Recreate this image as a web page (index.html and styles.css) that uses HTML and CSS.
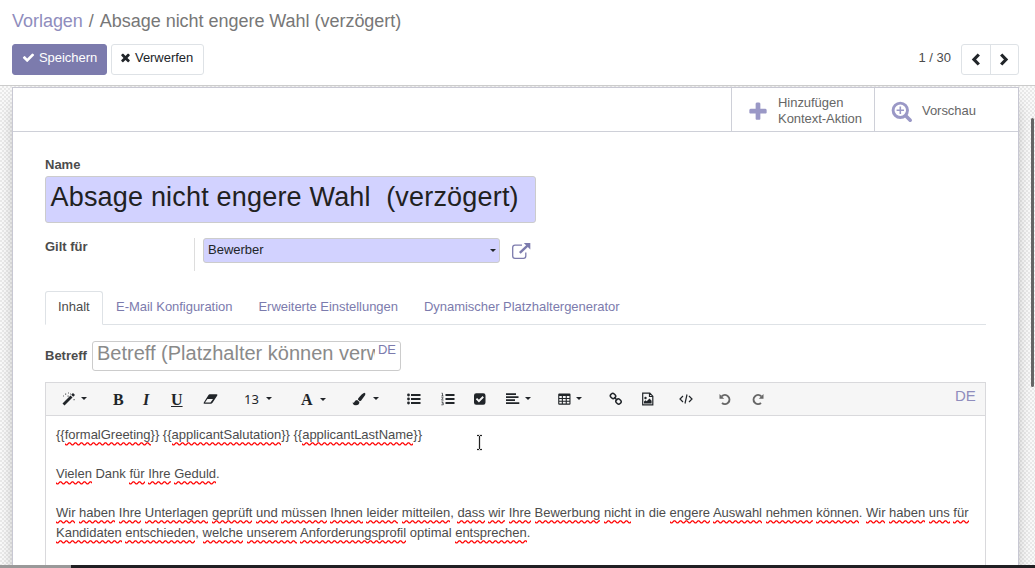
FILE: index.html
```html
<!DOCTYPE html>
<html lang="de">
<head>
<meta charset="utf-8">
<title>Vorlagen</title>
<link rel="stylesheet" href="styles.css">
</head>
<body>
<div class="app">
<header class="control-panel">
  <nav class="breadcrumb"><a class="crumb-link">Vorlagen</a><span class="crumb-sep">/</span><span class="crumb-current">Absage nicht engere Wahl (verzögert)</span></nav>
  <div class="actions">
    <button class="btn btn-primary"><svg width="13" height="13" viewBox="0 0 1792 1792"><path d="M1671 566q0 40-28 68l-724 724-136 136q-28 28-68 28t-68-28l-136-136-362-362q-28-28-28-68t28-68l136-136q28-28 68-28t68 28l294 295 656-657q28-28 68-28t68 28l136 136q28 28 28 68z"/></svg><span class="save-text">Speichern</span></button>
    <button class="btn btn-plain"><svg width="13" height="13" viewBox="0 0 1792 1792"><path d="M1490 1322q0 40-28 68l-136 136q-28 28-68 28t-68-28l-294-294-294 294q-28 28-68 28t-68-28l-136-136q-28-28-28-68t28-68l294-294-294-294q-28-28-28-68t28-68l136-136q28-28 68-28t68 28l294 294 294-294q28-28 68-28t68 28l136 136q28 28 28 68t-28 68l-294 294 294 294q28 28 28 68z"/></svg><span class="discard-text">Verwerfen</span></button>
    <span class="pager-count">1 / 30</span>
    <div class="pager">
      <button class="pager-btn"><svg width="13" height="14" viewBox="0 0 13 14"><path class="chev" d="M9.800 1.500 5 6.500l4.800 5"/></svg></button>
      <button class="pager-btn"><svg width="13" height="14" viewBox="0 0 13 14"><path class="chev" d="M3.200 1.500l4.800 5-4.800 5"/></svg></button>
    </div>
  </div>
</header>
<main class="content">
  <section class="sheet">
    <div class="stat-bar">
      <div class="stat stat-add"><svg width="22" height="22" viewBox="0 0 1792 1792"><path d="M1600 736v192q0 40-28 68t-68 28h-416v416q0 40-28 68t-68 28h-192q-40 0-68-28t-28-68v-416h-416q-40 0-68-28t-28-68v-192q0-40 28-68t68-28h416v-416q0-40 28-68t68-28h192q40 0 68 28t28 68v416h416q40 0 68 28t28 68z"/></svg><span class="stat-text">Hinzufügen<br>Kontext-Aktion</span></div>
      <div class="stat stat-preview"><svg width="22" height="22" viewBox="0 0 22 22"><g class="lens"><circle cx="9.300" cy="9.300" r="7.200" stroke-width="2.900"/><path stroke-width="3.600" stroke-linecap="round" d="M15 15l4.200 4.200"/><path stroke-width="1.600" d="M5.600 9.300H13M9.300 5.600V13"/></g></svg><span class="stat-text">Vorschau</span></div>
    </div>
    <div class="form">
      <label class="label name-label">Name</label>
      <div class="name-input">Absage nicht engere Wahl&nbsp; (verzögert)</div>
      <div class="model-row">
        <label class="label model-label">Gilt für</label>
        <div class="model-field">
          <div class="select"><span>Bewerber</span><i class="caret"></i></div>
          <svg class="ext" width="20" height="18" viewBox="0 0 20 18"><path class="line" d="M11 3.200H4Q1.700 3.200 1.700 5.500V14Q1.700 16.300 4 16.300H12.500Q14.800 16.300 14.800 14V10.500"/><path class="arrow" d="M8.800 10.800L16.500 3.600"/><path d="M12.800 1H19.300V7.500Z"/></svg>
        </div>
      </div>
      <nav class="tabs"><a class="tab active">Inhalt</a><a class="tab">E-Mail Konfiguration</a><a class="tab">Erweiterte Einstellungen</a><a class="tab">Dynamischer Platzhaltergenerator</a></nav>
      <div class="subject-row">
        <label class="label">Betreff</label>
        <div class="subject-input"><span class="placeholder">Betreff (Platzhalter können verw</span><span class="lang">DE</span></div>
      </div>
      <div class="editor">
        <div class="toolbar">
          <span class="tool"><svg width="14" height="14" viewBox="0 0 14 14"><path d="M.5 11.500L8.500 3.500 10.500 5.500 2.500 13.500Z M9.200 2.800L11 1 13 3 11.200 4.800Z"/><path d="M3 1.500h1.200v1.200H3zM6 .5h1v1H6zM5.500 3.500h1.200v1.200H5.500zM1 3.500h1v1H1zM11.500 7h1.200v1.200h-1.200zM8 1.500h1v1H8z" opacity=".7"/></svg><i class="caret"></i></span>
          <span class="tool glyph">B</span>
          <span class="tool glyph italic">I</span>
          <span class="tool glyph underlined">U</span>
          <span class="tool"><svg width="15" height="12" viewBox="0 0 15 12"><path fill-rule="evenodd" d="M6.600 1.200H13.500Q14.800 1.200 14.300 2.500L9.500 9.800Q8.800 10.800 7.800 10.800H1.500Q0 10.800.8 9.500L5.500 2Q6 1.200 6.600 1.200ZM4.400 6L2 9.600H7.500L10 6Z"/></svg></span>
          <span class="tool size"><span>13</span><i class="caret"></i></span>
          <span class="tool glyph color"><span>A</span><i class="caret"></i></span>
          <span class="tool brush"><svg width="14" height="14" viewBox="0 0 14 14"><path d="M12.300.8Q14 1.200 13.200 3L9 8.800 7.800 9.300 5.900 7.500 6.300 6.200Q10 1.800 12.300.8ZM5.100 7.900L7.400 10Q7.200 13.200 4 13.200 1.200 13.300.3 10.400 2 11.200 2.500 9.700 3.200 7.900 5.100 7.900Z"/></svg><i class="caret"></i></span>
          <span class="tool"><svg width="14" height="12" viewBox="0 0 14 12"><path d="M4 1h9.500v2H4zM4 5h9.500v2H4zM4 9h9.500v2H4z"/><circle cx="1.500" cy="2" r="1.400"/><circle cx="1.500" cy="6" r="1.400"/><circle cx="1.500" cy="10" r="1.400"/></svg></span>
          <span class="tool"><svg width="14" height="14" viewBox="0 0 14 14"><path d="M4.500 2h9v2h-9zM4.500 6h9v2h-9zM4.500 10h9v2h-9z"/><path class="thin" d="M.5 1.200h1V4M.3 4h2.300M.4 5.700h1.800L.6 8.100h2M.4 10h1.800L1.300 11.200h1v1.600H.3"/></svg></span>
          <span class="tool"><svg width="12" height="12" viewBox="0 0 12 12"><path fill-rule="evenodd" d="M2.200.3h7.100Q11.500.3 11.500 2.500v7Q11.500 11.700 9.300 11.700H2.200Q0 11.700 0 9.500v-7Q0 .3 2.200.3ZM1.800 6.300L4.900 9.400 9.900 4.400 8.600 3.100 4.900 6.800 3.100 5Z"/></svg></span>
          <span class="tool"><svg width="14" height="12" viewBox="0 0 14 12"><path d="M0 .2h10V1.900H0zM0 3.200h12.500V4.900H0zM0 6.200h9V7.900H0zM0 9.200h13.300V10.900H0z"/></svg><i class="caret"></i></span>
          <span class="tool"><svg width="13" height="12" viewBox="0 0 13 12"><path fill-rule="evenodd" d="M1.200.5h10.300q1 0 1 1v9.200q0 1-1 1H1.200q-1 0-1-1V1.500q0-1 1-1ZM1.300 3v1.900h2.500V3zm3.600 0v1.900h2.800V3zm3.900 0v1.900h2.600V3zM1.300 5.900v1.900h2.500V5.900zm3.600 0v1.900h2.800V5.900zm3.900 0v1.900h2.600V5.900zM1.300 8.800v1.800h2.500V8.800zm3.600 0v1.800h2.800V8.800zm3.900 0v1.800h2.600V8.800z"/></svg><i class="caret"></i></span>
          <span class="tool"><svg width="14" height="14" viewBox="0 0 14 14"><g class="chain"><rect x="-2.600" y="-2.300" width="5.200" height="4.600" rx="2" transform="translate(4 4) rotate(45)"/><rect x="-2.600" y="-2.300" width="5.200" height="4.600" rx="2" transform="translate(9.500 9.500) rotate(45)"/><path d="M5.200 5.200L8.300 8.300"/></g></svg></span>
          <span class="tool"><svg width="12" height="14" viewBox="0 0 12 14"><path class="sheet-line" d="M.7 1.200H7.800L10.800 4.200V12.800H.7ZM7.500 1.200V4.500H10.800"/><circle cx="3.500" cy="6" r="1.200"/><path d="M2 11.500V9.500L3.500 8.300 4.700 9.300 7.500 6.500 9.600 8.800V11.500Z"/></svg></span>
          <span class="tool"><svg width="14" height="12" viewBox="0 0 14 12"><path class="code" d="M4 3L1 6l3 3M10 3l3 3-3 3M8 1.500L6 10.500"/></svg></span>
          <span class="tool muted"><svg width="13" height="13" viewBox="0 0 13 13"><path class="turn" d="M2.800 3.300A4.500 4.500 0 1 1 3 10"/><path d="M.5 1V5.700H5.200Z"/></svg></span>
          <span class="tool muted"><svg width="13" height="13" viewBox="0 0 13 13"><path class="turn" d="M10.200 3.300A4.500 4.500 0 1 0 10 10"/><path d="M12.500 1V5.700H7.800Z"/></svg></span>
          <span class="editor-lang">DE</span>
        </div>
        <div class="editable">
          <p>{{<u>formalGreeting</u>}} {{<u>applicantSalutation</u>}} {{<u>applicantLastName</u>}}</p>
          <p><u>Vielen</u> Dank <u>für</u> <u>Ihre</u> <u>Geduld</u>.</p>
          <p><u>Wir</u> <u>haben</u> <u>Ihre</u> <u>Unterlagen</u> <u>geprüft</u> <u>und</u> <u>müssen</u> <u>Ihnen</u> <u>leider</u> <u>mitteilen</u>, <u>dass</u> <u>wir</u> <u>Ihre</u> <u>Bewerbung</u> <u>nicht</u> in die <u>engere</u> <u>Auswahl</u> <u>nehmen</u> <u>können</u>. <u>Wir</u> <u>haben</u> <u>uns</u> <u>für</u><br><u>Kandidaten</u> <u>entschieden</u>, <u>welche</u> <u>unserem</u> <u>Anforderungsprofil</u> optimal <u>entsprechen</u>.</p>
        </div>
      </div>
    </div>
  </section>
</main>
<footer class="window-edge"><span class="edge-light"></span></footer>
<div class="scroll-thumb"></div>
<svg class="cursor" width="9" height="17" viewBox="0 0 9 17"><path class="halo" d="M2 1.500H7M4.500 1.500V15.500M2 15.500H7"/><path class="beam" d="M2 1.500H4M5 1.500H7M4.500 2V15M2 15.500H4M5 15.500H7"/></svg>
</div>
</body>
</html>
```
FILE: styles.css
```css
* { box-sizing: border-box; }
body { margin: 0; font: 13px/19.5px "Liberation Sans", Arial, sans-serif; color: #4c4c4c; }
.app { width: 1035px; height: 568px; display: flex; flex-direction: column; overflow: hidden; position: relative; background: #fff; }
svg { display: block; flex: none; fill: currentColor; }
button { font: inherit; margin: 0; }

.control-panel { height: 86px; flex: none; border-bottom: 1px solid #ccc; padding: 8px 16px 0 12px; }
.breadcrumb { display: flex; height: 36px; font-size: 18px; line-height: 27px; color: #777; white-space: nowrap; letter-spacing: -.03px; }
.crumb-link { color: #8f8dbd; }
.crumb-sep { margin: 0 6px; }
.actions { display: flex; align-items: flex-start; }
.btn { display: flex; height: 31px; padding: 3px 9px 0; border: 1px solid; border-radius: 3px; line-height: 19px; white-space: nowrap; letter-spacing: -.05px; }
.btn svg { margin: 3px 4px 0 0; }
.btn-primary { width: 95px; margin-right: 4px; background: #7c7bad; border-color: #7c7bad; color: #fff; }
.btn-plain { width: 93px; padding-left: 7px; background: #fff; border-color: #dee2e6; color: #212529; }
.btn-plain svg { margin-right: 3px; }
.pager-count { margin: 4px 10px 0 auto; }
.pager { display: flex; width: 58px; height: 31px; border: 1px solid #dee2e6; border-radius: 3px; }
.pager-btn { flex: 1; display: flex; align-items: center; justify-content: center; padding: 0; border: 0; background: none; color: #212529; }
.pager-btn + .pager-btn { border-left: 1px solid #dee2e6; }
.chev { fill: none; stroke: currentColor; stroke-width: 3.2; }

.content { flex: 1; min-height: 0; overflow: hidden; padding: 1px 16px 0 12px; background: repeating-conic-gradient(#e9e9e9 0 25%, #fafafa 0 50%) 0 0 / 4px 4px; }
.sheet { height: 520px; background: #fff; border: 1px solid #c8c8d3; box-shadow: 0 5px 20px -13px #000; }
.stat-bar { display: flex; justify-content: flex-end; height: 44px; border-bottom: 1px solid #ced0d8; color: #9a98c6; }
.stat { display: flex; align-items: center; border-left: 1px solid #ced0d8; }
.stat svg { margin-top: 4px; }
.stat-add { width: 143px; padding-left: 15px; gap: 9px; }
.stat-preview { width: 144px; padding-left: 16px; gap: 9px; }
.stat-text { padding-top: 2px; color: #666; line-height: 16px; white-space: nowrap; letter-spacing: -.04px; }
.lens { fill: none; stroke: currentColor; }

.form { padding: 23px 32px 0; }
.label { font-weight: bold; color: #4c4c4c; }
.name-label { display: block; height: 21px; }
.name-input { width: 491px; height: 47px; padding: 0 4.5px; border: 1px solid #ccc; border-radius: 3px; background: #d2d2ff; color: #212121; font-size: 27px; line-height: 40px; letter-spacing: .19px; white-space: nowrap; }
.model-row { display: flex; height: 33px; margin-top: 15px; }
.model-label { width: 149px; line-height: 18px; }
.model-field { display: flex; border-left: 1px solid #ddd; padding-left: 8px; }
.select { display: flex; justify-content: space-between; width: 297px; height: 25px; padding: 1px 3px 0 4px; border: 1px solid #ccc; border-radius: 3px; background: #d2d2ff; color: #212529; }
.caret { width: 0; height: 0; border: 3px solid transparent; border-top-color: currentColor; border-bottom: 0; }
.select .caret { margin-top: 9px; }
.ext { margin: 4px 0 0 11px; color: #7c7bad; }
.line { fill: none; stroke: currentColor; stroke-width: 1.3; }
.arrow { fill: none; stroke: currentColor; stroke-width: 2.4; }

.tabs { display: flex; height: 34px; margin-top: 20px; border-bottom: 1px solid #dee2e6; color: #7c7bad; white-space: nowrap; letter-spacing: -.03px; }
.tab { height: 34px; padding: 5px 12px 0; border: 1px solid transparent; }
.tab.active { width: 58px; border-color: #dee2e6; border-bottom-color: #fff; border-radius: 3px 3px 0 0; background: #fff; color: #4c4c4c; }
.subject-row { display: flex; margin-top: 16px; height: 41px; gap: 5px; }
.subject-row .label { width: 42px; padding-top: 5px; }
.subject-input { display: flex; width: 309px; height: 30px; border: 1px solid #ccc; border-radius: 3px; padding: 0 4px; }
.placeholder { width: 278px; overflow: hidden; white-space: nowrap; color: #8a8a8a; font-size: 20px; line-height: 23px; }
.lang { margin-left: 3px; line-height: 15px; color: #7c7bad; }

.editor { border: 1px solid #d9d9dc; height: 200px; }
.toolbar { display: grid; grid-template-columns: 51px 30px 28px 32px 41px 57px 51px 55px 34px 33px 32px 52px 51px 33px 37px 40px 32px 204px 25px; height: 33px; padding-left: 16px; align-items: center; background: #f6f6f6; border-bottom: 1px solid #d9d9dc; color: #212529; }
.tool { display: flex; align-items: center; gap: 5px; }
.tool .caret { margin-top: -1px; }
.glyph { font: bold 16px/20px "Liberation Serif", serif; padding-top: 1px; }
.italic { font-style: italic; }
.underlined { text-decoration: underline; }
.size { font: 13px/20px "Noto Sans", sans-serif; gap: 7px; }
.color, .brush { gap: 7px; }
.muted { color: #666; }
.thin, .sheet-line, .code, .chain, .turn { fill: none; stroke: currentColor; }
.thin { stroke-width: .7; }
.sheet-line, .code { stroke-width: 1.2; }
.chain { stroke-width: 1.5; }
.turn { stroke-width: 2; }
.editor-lang { font-size: 15px; color: #8f8dbd; padding-bottom: 6px; }
.editable { padding: 9px 10px; white-space: nowrap; letter-spacing: -.008px; }
.editable p { margin: 0 0 19.5px; }
.editable u { text-decoration: none; padding-bottom: 4px; background: url("data:image/svg+xml,%3Csvg xmlns='http://www.w3.org/2000/svg' width='6' height='4'%3E%3Cpath d='M-2 .9H-1L1 2.900H2L4 .9H5L7 2.900' fill='none' stroke='%23f00' stroke-width='1.300'/%3E%3C/svg%3E") left bottom / 6px 4px repeat-x; }

.window-edge { height: 3px; flex: none; background: #202023; display: flex; }
.edge-light { width: 71px; background: #999; }
.scroll-thumb { position: absolute; left: 1031px; top: 118px; width: 3px; height: 269px; border-radius: 2px; background: #666; }
.cursor { position: absolute; left: 475px; top: 434px; fill: none; }
.halo { stroke: #e4e4e4; stroke-width: 3; }
.beam { stroke: #222; stroke-width: 1; }
```
